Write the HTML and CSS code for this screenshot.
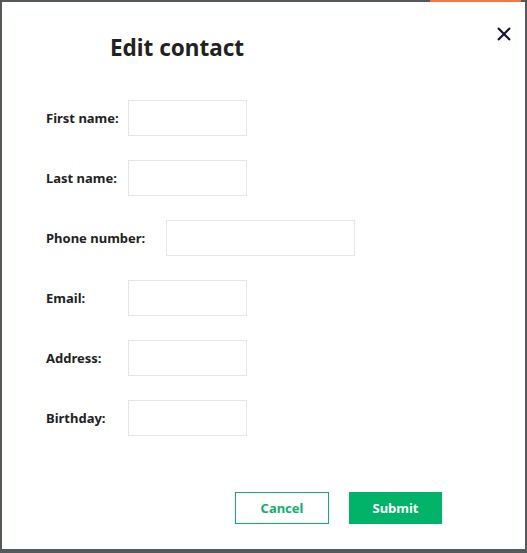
FILE: index.html
```html
<!DOCTYPE html>
<html>
<head>
<meta charset="utf-8">
<link rel="stylesheet" href="styles.css">
</head>
<body>
<div class="topbar"><span class="accent"></span></div>
<div class="modal">
  <button class="close" aria-label="Close">
    <svg width="16" height="16" viewBox="0 0 16 16"><path d="M2 2 L14 14 M14 2 L2 14" stroke="#141433" stroke-width="2.2" fill="none"/></svg>
  </button>
  <h1 class="title">Edit contact</h1>
  <form class="form">
    <div class="row"><label class="label">First name:</label><input class="input"></div>
    <div class="row"><label class="label">Last name:</label><input class="input"></div>
    <div class="row row-wide"><label class="label label-auto">Phone number:</label><input class="input input-wide"></div>
    <div class="row"><label class="label">Email:</label><input class="input"></div>
    <div class="row"><label class="label">Address:</label><input class="input"></div>
    <div class="row"><label class="label">Birthday:</label><input class="input"></div>
  </form>
  <div class="actions">
    <button class="btn btn-cancel">Cancel</button>
    <button class="btn btn-submit">Submit</button>
  </div>
</div>
</body>
</html>
```
FILE: styles.css
```css
html, body {
  margin: 0;
  padding: 0;
}
body {
  width: 527px;
  height: 553px;
  background: #55585c;
  padding: 0 2px 4px 2px;
  box-sizing: border-box;
  display: flex;
  flex-direction: column;
  font-family: "Noto Sans", "Open Sans", sans-serif;
  overflow: hidden;
}
.topbar {
  height: 2px;
  flex: none;
  display: flex;
}
.accent {
  margin-left: 428px;
  width: 91px;
  height: 2px;
  background: #ee7a45;
}
.modal {
  position: relative;
  flex: 1;
  background: #ffffff;
}
.close {
  position: absolute;
  top: 24px;
  right: 13px;
  padding: 0;
  border: 0;
  background: none;
  width: 16px;
  height: 16px;
}
.close svg { display: block; }
.title {
  margin: 29px 0 0 108px;
  height: 34px;
  line-height: 34px;
  font-size: 22.5px;
  font-weight: 700;
  color: #222222;
}
.form {
  margin: 35px 0 0 44px;
  display: flex;
  flex-direction: column;
  gap: 24px;
}
.row {
  display: flex;
  align-items: center;
  gap: 10px;
  height: 36px;
}
.row-wide { gap: 21px; }
.label {
  flex: none;
  width: 72px;
  white-space: nowrap;
  font-size: 13px;
  font-weight: 700;
  color: #222222;
  margin-top: -1px;
}
.label-auto { width: auto; }
.input {
  flex: none;
  width: 119px;
  height: 36px;
  box-sizing: border-box;
  border: 1px solid #e6e6e6;
  background: #fff;
  margin: 0;
  padding: 0;
}
.input-wide { width: 189px; }
.actions {
  margin-top: 56px;
  display: flex;
  justify-content: flex-end;
  gap: 20px;
  padding-right: 83px;
}
.btn {
  height: 32px;
  box-sizing: border-box;
  font-family: "Noto Sans", "Open Sans", sans-serif;
  font-size: 13px;
  font-weight: 700;
  padding: 0;
}
.btn-cancel {
  width: 94px;
  border: 1px solid #0fb06e;
  background: #fff;
  color: #12b06c;
}
.btn-submit {
  width: 93px;
  border: 0;
  background: #00b368;
  color: #ffffff;
}
```
